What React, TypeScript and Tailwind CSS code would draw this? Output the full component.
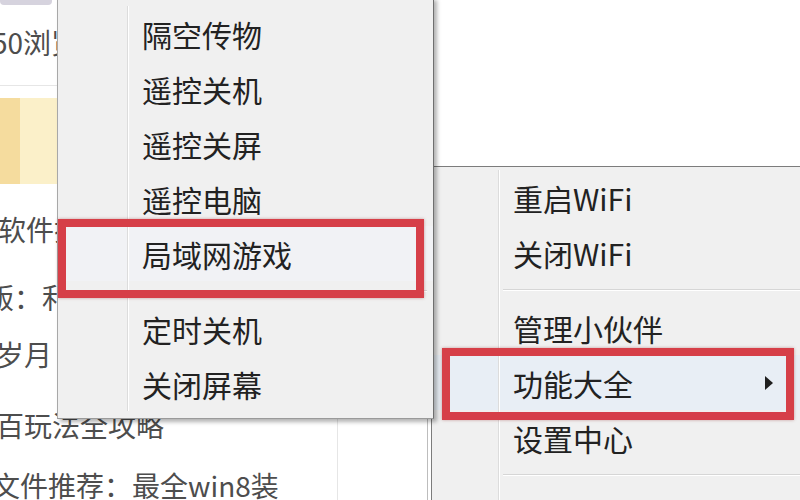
import React from 'react';

const FONT = "font-['Noto_Sans_CJK_SC','Noto_Sans',sans-serif]";

type Entry = { label?: string; sep?: boolean; active?: boolean; sub?: boolean };

const leftMenu: Entry[] = [
  { label: '隔空传物' },
  { label: '遥控关机' },
  { label: '遥控关屏' },
  { label: '遥控电脑' },
  { label: '局域网游戏', active: true },
  { sep: true },
  { label: '定时关机' },
  { label: '关闭屏幕' },
];

const rightMenu: Entry[] = [
  { label: '重启WiFi' },
  { label: '关闭WiFi' },
  { sep: true },
  { label: '管理小伙伴' },
  { label: '功能大全', active: true, sub: true },
  { label: '设置中心' },
  { sep: true },
  { label: '' },
];

function MenuRows({ items, gutter, activeBg }: { items: Entry[]; gutter: string; activeBg: string }) {
  return (
    <>
      {items.map((it, i) =>
        it.sep ? (
          <div key={i} className="flex h-[20px]">
            <div className={`${gutter} shrink-0 border-r border-[#dcdcdc] shadow-[1px_0_0_#ffffff]`} />
            <div className="flex-1 flex items-center pl-[4px] pr-[6px]">
              <div className="h-[2px] w-full border-t border-[#d6d6d6] border-b border-b-white" />
            </div>
          </div>
        ) : (
          <div key={i} className={`flex h-[55px] items-center ${it.active ? activeBg : ''}`}>
            <div className={`${gutter} h-full shrink-0 border-r border-[#dcdcdc] shadow-[1px_0_0_#ffffff]`} />
            <span className="pl-[14px] text-[30px] leading-none text-[#222222]">{it.label}</span>
            {it.sub && (
              <svg className="ml-auto mr-[38px]" width="8" height="14" viewBox="0 0 8 14">
                <path d="M0 0 L8 7 L0 14 Z" fill="#1f1f1f" />
              </svg>
            )}
          </div>
        )
      )}
    </>
  );
}

export default function App() {
  return (
    <div className={`relative w-[800px] h-[500px] overflow-hidden bg-white ${FONT}`}>
      {/* page behind the menus */}
      <div className="flex h-full">
        <div className="w-[338px] shrink-0 border-r border-[#e6e6e6] flex flex-col text-[28px] leading-[30px] text-[#4d4d4d] whitespace-nowrap">
          <div className="h-[5px] w-[52px] rounded-b-[4px] bg-[#d6d3de]" />
          <div className="mt-[22px] ml-[-8px]">50浏览器</div>
          <div className="mt-[28px] h-px w-[80px] bg-[#e6e6e6]" />
          <div className="mt-[12px] flex h-[87px] w-[80px]">
            <div className="w-[20px] bg-[#f5dc9e]" />
            <div className="flex-1 bg-[#fbf0c9]" />
          </div>
          <div className="mt-[30px] ml-[-2px]">软件搜索</div>
          <div className="mt-[38px] ml-[-14px]">版：利用</div>
          <div className="mt-[27px] ml-[-4px]">岁月</div>
          <div className="mt-[41px] ml-[-4px]">百玩法全攻略</div>
          <div className="mt-[30px] ml-[-8px]">文件推荐：最全win8装</div>
        </div>
        <div className="w-[90px] shrink-0 border-r border-[#bdbdbd]" />
        <div className="flex-1" />
      </div>

      {/* main context menu */}
      <div className="absolute left-[431px] top-[166px] w-[380px] h-[345px] bg-[#f0f0f0] border-t border-l border-[#7c7c7c] pt-[3px]">
        <MenuRows items={rightMenu} gutter="w-[67px]" activeBg="bg-[#e8eef5]" />
      </div>

      {/* submenu */}
      <div className="absolute left-[57px] top-[-3px] w-[377px] h-[422px] bg-[#f0f0f0] border-l border-[#a8a8a8] border-r border-r-[#6f6f6f] border-b border-b-[#9a9a9a] shadow-[3px_3px_4px_rgba(0,0,0,0.3)] pt-[9px]">
        <MenuRows items={leftMenu} gutter="w-[70px]" activeBg="bg-[#f1f2f5]" />
      </div>

      {/* red annotation boxes */}
      <div className="absolute left-[58px] top-[219px] w-[366px] h-[79px] border-[8px] border-[#d63f48] shadow-[0_0_3px_rgba(120,0,0,0.35)]" />
      <div className="absolute left-[442px] top-[348px] w-[352px] h-[72px] border-[8px] border-[#d63f48] shadow-[0_0_3px_rgba(120,0,0,0.35)]" />
    </div>
  );
}
